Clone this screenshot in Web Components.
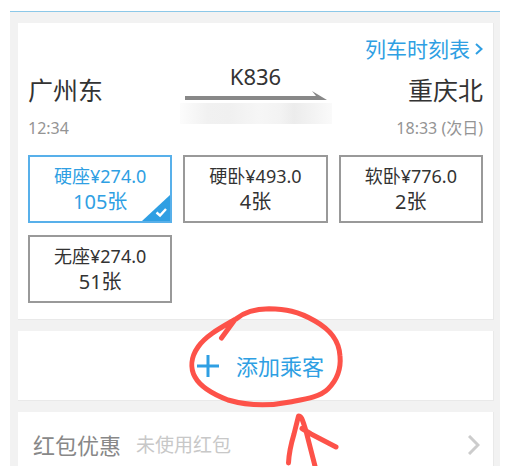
<!DOCTYPE html>
<html lang="zh-CN">
<head>
    <meta charset="UTF-8">
    <meta name="viewport" content="width=device-width, initial-scale=1">
    <title>添加乘客</title>
    <style>
        body {
            margin: 0;
            padding: 11px 6px 7px 10px;
            background: #fff;
            color: #333;
            font-family: "Noto Sans", "Noto Sans CJK SC", sans-serif;
            --blue: #2f9fe3;
            --line: #999;
        }
    </style>
</head>

<body>

<order-page>
    <order-card>
        <train-trip>
            <a slot="link" href="#timetable">列车时刻表</a>
            <span slot="from">广州东</span>
            <span slot="number">K836</span>
            <span slot="to">重庆北</span>
            <span slot="depart">12:34</span>
            <span slot="arrive">18:33 (次日)</span>
        </train-trip>
        <seat-list>
            <seat-option selected>硬座¥274.0<span slot="left">105张</span></seat-option>
            <seat-option>硬卧¥493.0<span slot="left">4张</span></seat-option>
            <seat-option>软卧¥776.0<span slot="left">2张</span></seat-option>
            <seat-option>无座¥274.0<span slot="left">51张</span></seat-option>
        </seat-list>
    </order-card>
    <order-card>
        <add-passenger>添加乘客</add-passenger>
    </order-card>
    <order-card>
        <coupon-row>红包优惠<span slot="value">未使用红包</span></coupon-row>
    </order-card>
</order-page>

<script>
  class BaseElement extends HTMLElement {
    constructor() {
      super();
      this.attachShadow({mode: "open"});
      this.shadowRoot.innerHTML = this.template();
    }
  }

  class OrderPage extends BaseElement {
    template() {
      return `
        <style>
          :host {
            display: flex;
            flex-direction: column;
            gap: 11px;
            padding: 11px 6px 0 8px;
            overflow: hidden;
            border-top: 1px solid #8cc8e8;
            background: #f2f2f2;
          }
          ::slotted(order-card:last-of-type) { border-bottom: 0; }
        </style>
        <slot></slot>`;
    }
  }

  class OrderCard extends BaseElement {
    template() {
      return `
        <style>
          :host {
            display: block;
            padding: 0 10px;
            border-right: 1px solid #e9e9e9;
            border-bottom: 1px solid #e9e9e9;
            background: #fff;
          }
        </style>
        <slot></slot>`;
    }
  }

  class TrainTrip extends BaseElement {
    template() {
      return `
        <style>
          :host {
            display: grid;
            grid-template-columns: 1fr 152px 1fr;
            grid-template-rows: 26px 30px 20px;
            row-gap: 13px;
            padding: 13px 0 17px;
          }
          .link {
            grid-area: 1 / 3;
            display: flex;
            align-items: center;
            justify-content: flex-end;
            gap: 5px;
            white-space: nowrap;
          }
          ::slotted(a) {
            color: var(--blue);
            font-size: 21px;
            line-height: 26px;
            text-decoration: none;
          }
          .from { grid-area: 2 / 1; }
          .to { grid-area: 2 / 3; }
          .depart { grid-area: 3 / 1; }
          .arrive { grid-area: 3 / 3; }
          .city { font-size: 25px; line-height: 30px; }
          .time { color: #949494; font-size: 16px; line-height: 20px; }
          .right { text-align: right; }
          .middle {
            grid-area: 1 / 2 / 4 / 3;
            display: flex;
            flex-direction: column;
            align-items: center;
            justify-content: flex-end;
            padding-bottom: 14px;
          }
          .number { font-size: 22px; line-height: 28px; }
          .masked {
            align-self: stretch;
            height: 21px;
            margin-top: 3px;
            background: linear-gradient(90deg, #fcfcfc, #f1f1f1 18%, #f0f0f0 32%, #f6f6f6 52%, #f3f3f3 66%, #ececec 75%, #f3f3f3 88%, #fafafa);
          }
        </style>
        <div class="link">
          <slot name="link"></slot>
          <svg width="8" height="12" viewBox="0 0 8 12" fill="none" stroke="#2f9fe3" stroke-width="2"><path d="M1 1l5.5 5L1 11"/></svg>
        </div>
        <div class="city from"><slot name="from"></slot></div>
        <div class="middle">
          <div class="number"><slot name="number"></slot></div>
          <svg width="142" height="10" viewBox="0 0 142 10" fill="#888"><path d="M0 6h131L127 1l15 9H0z"/></svg>
          <div class="masked"></div>
        </div>
        <div class="city to right"><slot name="to"></slot></div>
        <div class="time depart"><slot name="depart"></slot></div>
        <div class="time arrive right"><slot name="arrive"></slot></div>`;
    }
  }

  class SeatList extends BaseElement {
    constructor() {
      super();
      this.addEventListener("click", e => {
        const seat = e.target.closest("seat-option");
        if (!seat) return;
        for (let child of this.children) {
          child.toggleAttribute("selected", child === seat);
        }
      });
    }

    template() {
      return `
        <style>
          :host {
            display: grid;
            grid-template-columns: repeat(3, 1fr);
            gap: 12px 11px;
            padding-bottom: 16px;
          }
        </style>
        <slot></slot>`;
    }
  }

  class SeatOption extends BaseElement {
    static get observedAttributes() {
      return ["selected"];
    }

    attributeChangedCallback() {
      this.shadowRoot.querySelector("button").setAttribute("aria-pressed", this.hasAttribute("selected"));
    }

    template() {
      return `
        <style>
          :host { display: block; }
          button {
            position: relative;
            display: block;
            width: 100%;
            padding: 6px 0;
            border: 2px solid var(--line);
            background: #fff;
            color: #333;
            font: 18px/26px "Noto Sans", "Noto Sans CJK SC", sans-serif;
            cursor: pointer;
          }
          .left { font-size: 20px; }
          span { display: block; }
          svg { display: none; position: absolute; right: 0; bottom: 0; }
          :host([selected]) button { border-color: #58b0ea; color: var(--blue); }
          :host([selected]) svg { display: block; }
        </style>
        <button type="button" aria-pressed="false">
          <span><slot></slot></span>
          <span class="left"><slot name="left"></slot></span>
          <svg width="28" height="26" viewBox="0 0 28 26">
            <path d="M28 0v26H0z" fill="#2f9fe3"/>
            <path d="M14.5 17.5l3.500 3 6-6.500" fill="none" stroke="#fff" stroke-width="2.4"/>
          </svg>
        </button>`;
    }
  }

  class AddPassenger extends BaseElement {
    template() {
      return `
        <style>
          :host { display: block; position: relative; }
          button {
            display: flex;
            align-items: center;
            justify-content: center;
            gap: 17px;
            width: 100%;
            padding: 21px 0 20px 10px;
            border: 0;
            background: none;
            color: var(--blue);
            font: 22px/28px "Noto Sans", "Noto Sans CJK SC", sans-serif;
            cursor: pointer;
          }
          hand-mark { position: absolute; top: -26px; left: 50%; margin-left: -71px; }
        </style>
        <button type="button">
          <svg width="22" height="22" viewBox="0 0 22 22" stroke="#2f9fe3" stroke-width="3"><path d="M0 11h22M11 0v22"/></svg>
          <slot></slot>
        </button>
        <hand-mark></hand-mark>`;
    }
  }

  // red pen circle and arrow over the button
  class HandMark extends BaseElement {
    template() {
      return `
        <style>
          :host { display: block; pointer-events: none; }
          svg { display: block; }
        </style>
        <svg width="160" height="170" viewBox="185 305 160 170" fill="none" stroke="#fd5249" stroke-width="5" stroke-linecap="round" stroke-linejoin="round">
          <path d="M221.500 338L235 319.500C224 326 206 335 198 347C191 357 190 368 195 377C201 388 215 395 228 400C249 406 270 406 290 402C306 399 320 397 328 389C338 379 341 367 340 356C339 339 329 329 315 321C298 311 285 309 269 308.800C254 309 243 313 236 319"/>
          <path d="M288.500 463C289 452 291 444 294 434L298.500 416C302 416 303 422 306 431L315.500 468M302 428.500L311 434L336 447"/>
        </svg>`;
    }
  }

  class CouponRow extends BaseElement {
    template() {
      return `
        <style>
          :host { display: block; }
          button {
            display: flex;
            align-items: center;
            gap: 15px;
            width: 100%;
            padding: 19px 3px 7px 5px;
            border: 0;
            background: none;
            color: #888;
            font: 22px/28px "Noto Sans", "Noto Sans CJK SC", sans-serif;
            cursor: pointer;
          }
          .value { flex: 1; color: #c8c8c8; font-size: 19px; text-align: left; }
        </style>
        <button type="button">
          <slot></slot>
          <span class="value"><slot name="value"></slot></span>
          <svg width="12" height="20" viewBox="0 0 12 20" fill="none" stroke="#ccc" stroke-width="3"><path d="M1 1l9 9-9 9"/></svg>
        </button>`;
    }
  }

  customElements.define("hand-mark", HandMark);
  customElements.define("order-page", OrderPage);
  customElements.define("order-card", OrderCard);
  customElements.define("train-trip", TrainTrip);
  customElements.define("seat-list", SeatList);
  customElements.define("seat-option", SeatOption);
  customElements.define("add-passenger", AddPassenger);
  customElements.define("coupon-row", CouponRow);
</script>
</body>
</html>
